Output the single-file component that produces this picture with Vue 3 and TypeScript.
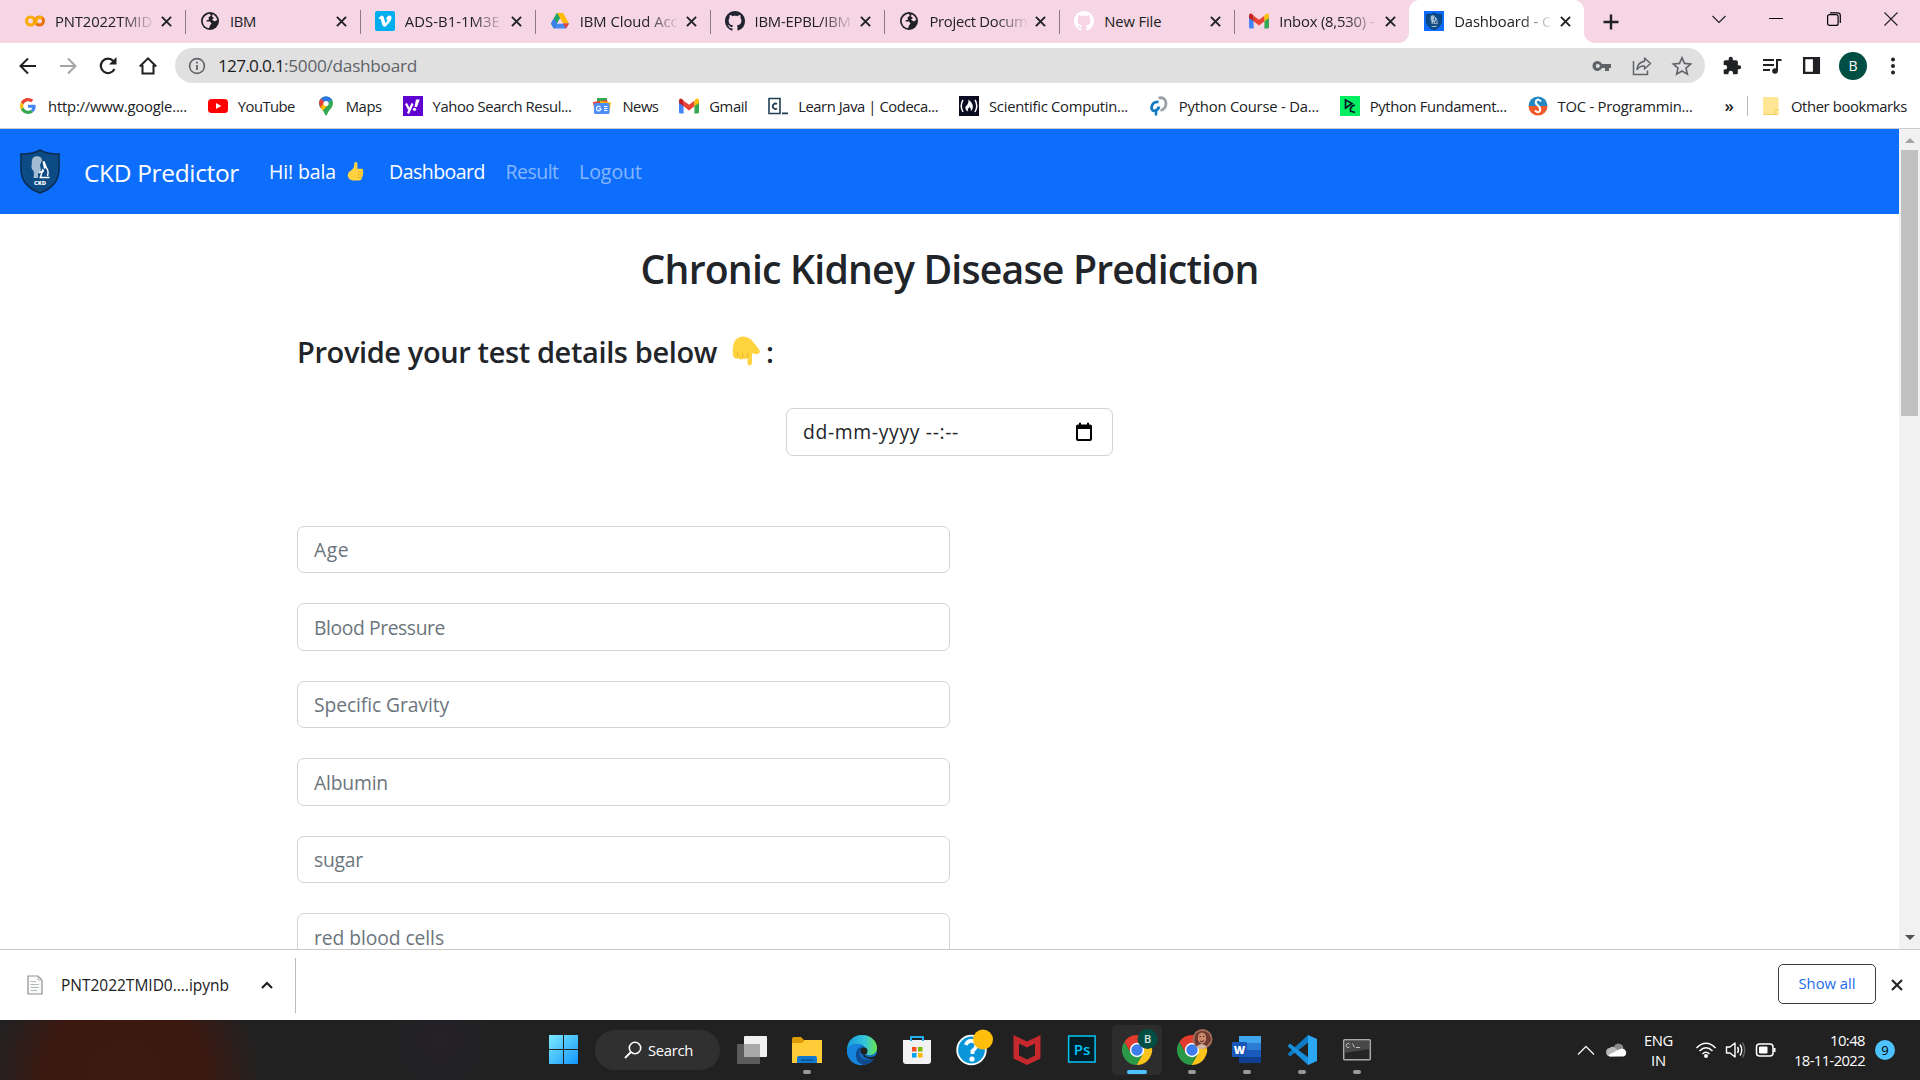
<script setup lang="ts">
import { h, nextTick, type FunctionalComponent, type ObjectDirective } from 'vue'

interface Glyph { box: string; body: string }
interface Entry { icon: string; label: string; width: number }

const chromeBody = `
  <path d="M3.3 8A15 15 0 0 1 29.3 9H16L16 16L9.9 19.5Z" fill="#e33b2e"/>
  <path d="M29.3 9A15 15 0 0 1 15.4 31L22.1 19.5L16 16V9Z" fill="#fcc31a"/>
  <path d="M15.4 31A15 15 0 0 1 3.3 8L9.9 19.5L16 16L22.1 19.5Z" fill="#2b9a48"/>
  <circle cx="16" cy="16" r="7.2" fill="#fff"/><circle cx="16" cy="16" r="5.7" fill="#3b7ded"/>`

const gmailBody = `
  <path d="M0 3V14.5Q0 16 1.5 16H4.6V6Z" fill="#4285f4"/><path d="M15.4 6V16H18.5Q20 16 20 14.5V3Z" fill="#34a853"/>
  <path d="M4.6 3.2L10 7.3L15.4 3.2V8.8L10 13L4.6 8.8Z" fill="#ea4335"/>
  <path d="M0 3Q0 1 2 1Q3 1 4.6 3.2V8.8L0 5.4Z" fill="#c5221f"/><path d="M20 3Q20 1 18 1Q17 1 15.4 3.2V8.8L20 5.4Z" fill="#fbbc04"/>`

const catPath = 'M8 0C3.58 0 0 3.58 0 8c0 3.54 2.29 6.53 5.47 7.59.4.07.55-.17.55-.38 0-.19-.01-.82-.01-1.49-2.01.37-2.53-.49-2.69-.94-.09-.23-.48-.94-.82-1.13-.28-.15-.68-.52-.01-.53.63-.01 1.08.58 1.23.82.72 1.21 1.87.87 2.33.66.07-.52.28-.87.51-1.07-1.78-.2-3.64-.89-3.64-3.95 0-.87.31-1.59.82-2.15-.08-.2-.36-1.02.08-2.12 0 0 .67-.21 2.2.82.64-.18 1.32-.27 2-.27s1.36.09 2 .27c1.53-1.04 2.2-.82 2.2-.82.44 1.1.16 1.92.08 2.12.51.56.82 1.27.82 2.15 0 3.07-1.87 3.75-3.65 3.95.29.25.54.73.54 1.48 0 1.07-.01 1.93-.01 2.2 0 .21.15.46.55.38A8.01 8.01 0 0 0 16 8c0-4.42-3.58-8-8-8Z'

const shieldBody = `
  <path d="M20 1C14 5 7 5 1 5V20C1 32 9 40 20 44C31 40 39 32 39 20V5C33 5 26 5 20 1Z" fill="#0d4b85" stroke="#082c52" stroke-width="1.6"/>
  <path d="M13.500 29Q14.500 25 13.500 22Q10.500 19 11.800 15.500Q11 7.500 16.500 7.300Q21.500 7 22 11.500L20 16L21 21L18 25V29Z" fill="#a5bdd3"/>
  <path d="M22.500 12.500L24.500 12L27 18.500L24 20Z" fill="#fff"/>
  <path d="M25 17.500Q29.500 21 27.500 27M19.500 28.500H29.500M19 23.500L24 22M23 20L20.500 28" fill="none" stroke="#fff" stroke-width="1.500"/>
  <text x="20" y="36" text-anchor="middle" font-family="Open Sans,sans-serif" font-weight="800" font-size="5.800" fill="#fff">CKD</text>`

const glyphs: Record<string, Glyph> = {
  colab: { box: '0 0 20 20', body: '<circle cx="5.500" cy="10" r="4" fill="none" stroke="#f9ab00" stroke-width="3"/><circle cx="14.500" cy="10" r="4" fill="none" stroke="#e8710a" stroke-width="3"/><path d="M11.700 12.800A4 4 0 0 1 17.300 7.200" fill="none" stroke="#f9ab00" stroke-width="3"/>' },
  globe: { box: '0 0 20 20', body: '<circle cx="10" cy="10" r="9" fill="#202124"/><path d="M3 8Q4.500 4 9.500 2.700L11 4.500L8.500 6.500L9 8.500L6.500 9.500V10.500H10L11.500 12.500L10 14.500L9 17.200Q3.500 16.500 2.700 10.500ZM12.500 3.200Q16.300 4.800 17.200 9L14.500 10.500L12 8.500L14 7L12 5.500Z" fill="#f7d6e5"/>' },
  vimeo: { box: '0 0 20 20', body: '<rect width="20" height="20" rx="2" fill="#00adef"/><path d="M3.500 7L6.500 4.500Q8.600 4.200 9.100 7Q9.900 11.700 10.600 11.700Q11.300 11.600 12.300 9.500Q12.900 8 11 8.300Q12.200 4.500 14.900 4.600Q17.300 5 16.200 8.500Q14.800 12 10.500 15.500Q8.300 16.600 7.200 13.500L5.700 8.200Q5.300 7.300 4.200 8Z" fill="#fff"/>' },
  drive: { box: '0 0 20 20', body: '<path d="M7 2H13L10 7.300L4 17.500L1 12.500Z" fill="#1ea362"/><path d="M7 2H13L19 12.500H13Z" fill="#ffba00"/><path d="M1 12.500L4 17.500H16L19 12.500H7Z" fill="#4688f4"/><path d="M7 2L1 12.500L4 17.500L10 7.300Z" fill="#1fa463"/><path d="M1 12.500L4 17.500L7 12.400L4 7.300Z" fill="#3c80ef"/><path d="M13 12.500H19L16 17.500Z" fill="#ea4335"/><path d="M10 7.300L13 12.500H7Z" fill="#f7d6e5"/>' },
  cat: { box: '0 0 16 16', body: `<path d="${catPath}" fill="#202430"/>` },
  catLight: { box: '0 0 16 16', body: `<path d="${catPath}" fill="#fff"/>` },
  gmail: { box: '0 -1.500 20 20', body: gmailBody },
  dash: { box: '0 0 40 40', body: `<rect width="40" height="40" fill="#0d6efd"/><g transform="translate(4 3) scale(.8 .78)">${shieldBody}</g>` },
  shield: { box: '0 0 40 45', body: shieldBody },
  close: { box: '0 0 12 12', body: '<path d="M1 1L11 11M11 1L1 11" stroke="#202124" stroke-width="2.100"/>' },
  plus: { box: '0 0 16 16', body: '<path d="M8 .5V15.500M.5 8H15.500" stroke="#202124" stroke-width="2.400"/>' },
  back: { box: '0 0 20 20', body: '<path d="M18 10H3M10 2.500L2.500 10L10 17.500" fill="none" stroke="#202124" stroke-width="2"/>' },
  forward: { box: '0 0 20 20', body: '<path d="M2 10H17M10 2.500L17.500 10L10 17.500" fill="none" stroke="#a3a5a8" stroke-width="2"/>' },
  reload: { box: '0 0 20 20', body: '<path d="M16.500 13A7.200 7.200 0 1 1 15.300 5" fill="none" stroke="#202124" stroke-width="2.200"/><path d="M18.500 1V8.500H11Z" fill="#202124"/>' },
  home: { box: '0 0 20 20', body: '<path d="M1.800 10.500L10 2.300L18.200 10.500M4.500 9V17.500H15.500V9" fill="none" stroke="#202124" stroke-width="2"/>' },
  info: { box: '0 0 18 18', body: '<circle cx="9" cy="9" r="7.400" fill="none" stroke="#5f6368" stroke-width="1.600"/><path d="M9 8V13M9 4.800V6.600" stroke="#5f6368" stroke-width="1.800"/>' },
  key: { box: '0 0 20 20', body: '<path d="M10 8A5 5 0 1 0 10 12H13V15H17V12H19V8ZM5.800 12A2 2 0 1 1 5.800 8A2 2 0 0 1 5.800 12Z" fill="#5f6368" fill-rule="evenodd"/>' },
  share: { box: '0 0 20 20', body: '<path d="M1.500 5V18.500H15.500V14.500" fill="none" stroke="#5f6368" stroke-width="1.500"/><path d="M12.500 2L18.500 7.500L12.500 13V10Q8 9.500 5 13.500Q5.500 6.500 12.500 5.300Z" fill="none" stroke="#5f6368" stroke-width="1.500" stroke-linejoin="round"/>' },
  star: { box: '0 0 20 20', body: '<path d="M10 1.700L12.500 7.400L18.700 8L14 12.100L15.400 18.200L10 15L4.600 18.200L6 12.100L1.300 8L7.500 7.400Z" fill="none" stroke="#5f6368" stroke-width="1.600"/>' },
  puzzle: { box: '0 0 24 24', body: '<path d="M20.500 11H19V7c0-1.100-.9-2-2-2h-4V3.500a2.500 2.500 0 0 0-5 0V5H4c-1.100 0-2 .9-2 2v3.800h1.500a2.700 2.700 0 0 1 0 5.400H2V20c0 1.100.9 2 2 2h3.800v-1.500a2.700 2.700 0 0 1 5.400 0V22H17c1.100 0 2-.9 2-2v-4h1.500a2.500 2.500 0 0 0 0-5z" fill="#202124"/>' },
  music: { box: '0 0 20 20', body: '<path d="M1 4H12M1 9H12M1 14H8" stroke="#202124" stroke-width="2"/><circle cx="13" cy="15" r="2.800" fill="#202124"/><path d="M15 15V4H19.500" fill="none" stroke="#202124" stroke-width="2"/>' },
  panel: { box: '0 0 20 20', body: '<path d="M1 1H19V19H1ZM3.500 3.500V16.500H11.500V3.500Z" fill="#202124" fill-rule="evenodd"/>' },
  dots: { box: '0 0 6 20', body: '<g fill="#202124"><circle cx="3" cy="3.500" r="2"/><circle cx="3" cy="10" r="2"/><circle cx="3" cy="16.500" r="2"/></g>' },
  winDown: { box: '0 0 14 14', body: '<path d="M.5 4L7 10.500L13.500 4" fill="none" stroke="#222" stroke-width="1.100"/>' },
  winMin: { box: '0 0 14 14', body: '<path d="M0 6.500H14" stroke="#000" stroke-width="1"/>' },
  winRestore: { box: '0 0 14 14', body: '<rect x=".6" y="2.600" width="10.500" height="10.800" rx="2" fill="none" stroke="#000" stroke-width="1.200"/><path d="M3 .8H10.500Q13.300 .8 13.300 3.500V11" fill="none" stroke="#000" stroke-width="1.200"/>' },
  winClose: { box: '0 0 14 14', body: '<path d="M.5 .5L13.500 13.500M13.500 .5L.5 13.500" stroke="#222" stroke-width="1.100"/>' },
  google: { box: '0 0 48 48', body: '<path fill="#EA4335" d="M24 9.500c3.540 0 6.710 1.220 9.210 3.600l6.850-6.850C35.900 2.380 30.470 0 24 0 14.620 0 6.510 5.380 2.560 13.220l7.980 6.190C12.430 13.720 17.740 9.500 24 9.500z"/><path fill="#4285F4" d="M46.980 24.550c0-1.570-.15-3.090-.38-4.550H24v9.020h12.940c-.58 2.960-2.260 5.480-4.780 7.180l7.730 6c4.510-4.180 7.090-10.360 7.090-17.650z"/><path fill="#FBBC05" d="M10.530 28.590c-.48-1.450-.76-2.990-.76-4.590s.27-3.140.76-4.590l-7.980-6.190C.92 16.460 0 20.120 0 24c0 3.880.92 7.540 2.560 10.780l7.970-6.190z"/><path fill="#34A853" d="M24 48c6.480 0 11.930-2.130 15.890-5.810l-7.730-6c-2.150 1.450-4.920 2.300-8.160 2.300-6.260 0-11.570-4.220-13.470-9.910l-7.980 6.190C6.510 42.620 14.620 48 24 48z"/>' },
  youtube: { box: '0 0 20 20', body: '<rect y="3" width="20" height="14" rx="3.500" fill="#f00"/><path d="M8 7V13L13.300 10Z" fill="#fff"/>' },
  maps: { box: '0 0 20 20', body: '<clipPath id="pin"><path d="M10 .5A7 7 0 0 1 17 7.500Q17 10.500 14 13.500Q11.500 16.500 10.800 19Q10 20.300 9.200 19Q8.500 16.500 6 13.500Q3 10.500 3 7.500A7 7 0 0 1 10 .5Z"/></clipPath><g clip-path="url(#pin)"><path d="M0 0H20V20H0Z" fill="#34a853"/><path d="M0 0H20L4.500 12.500H0Z" fill="#4285f4"/><path d="M0 0H7L10 7L4.500 12Z" fill="#ea4335"/><path d="M6 0H20V5L13 4L10 7L5 3Z" fill="#2b78e4"/><path d="M4 12L10 5L12 9L6.500 15Z" fill="#fbbc04"/></g><circle cx="10" cy="7.500" r="2.600" fill="#fff"/>' },
  yahoo: { box: '0 0 20 20', body: '<rect width="20" height="20" fill="#5f01d1"/><path d="M3 7.500L6 13.300M9.500 7.500L5 17.500" stroke="#fff" stroke-width="2.300" fill="none"/><path d="M13 3.500H16.800L14 11H11.500Z" fill="#fff"/><circle cx="11.500" cy="13.300" r="1.600" fill="#fff"/>' },
  news: { box: '0 0 20 20', body: '<path d="M5 2H15V10H5Z" fill="#34a853"/><path d="M1 6L15 4L17 12H2Z" fill="#ea4335"/><path d="M8 5L19 6.500L17.500 15H8Z" fill="#fbbc04"/><rect x="2" y="7" width="15.500" height="11" rx="1.500" fill="#4e8df5"/><path d="M12 10.500H15.500M12 12.500H15.500M12 14.500H15.500M8.600 11.200A2.300 2.300 0 1 0 9 12.800H6.800" stroke="#fff" stroke-width="1.100" fill="none"/>' },
  codecademy: { box: '0 0 20 20', body: '<path d="M1 2.500H12V17.500H1Z" fill="none" stroke="#204056" stroke-width="1.600"/><path d="M9 8A2.700 2.700 0 1 0 9 12.500M14 17.300H20" fill="none" stroke="#204056" stroke-width="1.800"/>' },
  fcc: { box: '0 0 20 20', body: '<rect width="20" height="20" fill="#0a0a23"/><path d="M4 4Q.5 9.500 4 16M16 4Q19.500 9.500 16 16" fill="none" stroke="#fff" stroke-width="1.500"/><path d="M9.500 3.500Q14.500 8 13.800 11.500Q13.500 14 11.800 15Q12.300 12.500 10.300 10.500Q10.500 12.500 8.800 12.800Q8.600 14.500 9.200 15.500Q5.800 14 6.500 10.500Q9.800 8 9.500 3.500Z" fill="#fff"/>' },
  pycourse: { box: '0 0 20 20', body: '<path d="M9.500 6Q3.500 5.500 2.500 11.500Q3 16 6.500 14.500Q9.500 13.500 10 10.500" fill="none" stroke="#147bc2" stroke-width="2.800"/><path d="M7 14V19.500" stroke="#147bc2" stroke-width="2.600"/><path d="M9.500 2Q16.500 .5 17 7.500Q16.500 13.500 11.500 14.500" fill="none" stroke="#9aa0a5" stroke-width="2.800"/>' },
  datacamp: { box: '0 0 20 20', body: '<rect width="20" height="20" fill="#03ef62"/><path d="M5.500 13V4L12 7.500L5 12.500M15 9Q9.500 10.500 10.500 15L15 16.500" fill="none" stroke="#05192d" stroke-width="1.700"/>' },
  toc: { box: '0 0 20 20', body: '<path d="M.5 10A9.500 9.500 0 0 1 19.500 10Z" fill="#2387c4"/><path d="M.5 10A9.500 9.500 0 0 0 19.500 10Z" fill="#f0592a"/><path d="M13 5.500Q10.500 2 8 5Q7 7.500 10 9.500Q13 12 12 15Q10 17.500 7 14.500" fill="none" stroke="#fff" stroke-width="2"/>' },
  folder: { box: '0 0 20 20', body: '<path d="M2 2Q2 1 3 1H16Q17.500 1 17.500 2.500V11L18 18Q18 19 16 19H3Q2 19 2 18Z" fill="#ffe694"/><path d="M14 18V13.500H17.500M2.500 18.500H16.500" stroke="#f0cf5e" fill="none"/>' },
  file: { box: '0 0 16 20', body: '<path d="M1 1H11L15 5V19H1Z" fill="#fafafa" stroke="#8f8f8f" stroke-width="1.200"/><path d="M11 1V5H15M3.500 6.500H9M3.500 9.500H12M3.500 12.500H12M3.500 15.500H10" fill="none" stroke="#b3b8bb"/>' },
  chevUp: { box: '0 0 12 8', body: '<path d="M1 7L6 2L11 7" fill="none" stroke="#202124" stroke-width="2.200"/>' },
  calendar: { box: '0 0 18 20', body: '<path d="M1 4.500Q1 2.500 3 2.500H4V.8H6V2.500H12V.8H14V2.500H15Q17 2.500 17 4.500V17Q17 19 15 19H3Q1 19 1 17ZM3 7V17H15V7Z" fill="#000" fill-rule="evenodd"/>' },
  thumbUp: { box: '0 0 18 22', body: '<path d="M5 9.500Q8 7 7.700 2Q9.500 -.2 11 2.500L11 8H16Q18 9 16.800 11Q18 12.300 16.700 14Q17.500 15.800 15.900 17Q16 19.800 13 20.500H6Q1 19.500 .8 15Q1 11.500 5 9.500Z" fill="#ffd23f"/><path d="M11 11.500H16.500M11 14.500H16.500M11 17.500H15.500" stroke="#e8ab2a" fill="none"/>' },
  pointDown: { box: '0 0 28 30', body: '<path d="M1 20Q-1 1 11 .5Q18 .5 22 7L27.500 14Q28.500 17 25.500 18Q23 18.500 20 17V27Q19.500 29.500 17.500 29.500Q15.500 29.500 15.500 27V21Q14.500 24 11.500 22.500Q9 24.500 6.500 22.200Q3 23.800 1 20Z" fill="#ffd43e"/><path d="M5.800 16V21.500M10.800 17V22M15.500 17V22" stroke="#eeb32c" fill="none"/>' },
  start: { box: '0 0 30 30', body: '<linearGradient id="win" x2="1" y2="1"><stop stop-color="#7deaff"/><stop offset="1" stop-color="#1296fb"/></linearGradient><path d="M0 0H14V14H0ZM15 0H29V14H15ZM0 15H14V29H0ZM15 15H29V29H15Z" fill="url(#win)"/>' },
  lens: { box: '0 0 18 18', body: '<circle cx="11" cy="7" r="5.700" fill="none" stroke="#fff" stroke-width="1.600"/><path d="M7 11L1 17" stroke="#fff" stroke-width="1.800"/>' },
  taskview: { box: '0 0 32 32', body: '<rect x="8" y="2" width="23" height="21" rx="1" fill="#f0f0f0"/><rect x="1" y="10" width="23" height="20" rx="1" fill="#5c5c5c"/><path d="M8 10H24V23H8Z" fill="#a8a8a8"/>' },
  explorer: { box: '0 0 32 32', body: '<path d="M1 5Q1 3 3 3H10L13 6H19V13H1Z" fill="#dd9b08"/><path d="M1 9H11L14 6H31V29H1Z" fill="#ffcc38"/><path d="M6 29V24Q6 22 8 22H24Q26 22 26 24V29Z" fill="#1178cb"/><path d="M10 26H22" stroke="#064b8d" stroke-width="1.300"/>' },
  edge: { box: '0 0 32 32', body: '<linearGradient id="sea" x2="1"><stop stop-color="#189ad8"/><stop offset=".6" stop-color="#35c5dc"/><stop offset="1" stop-color="#6be648"/></linearGradient><circle cx="16" cy="16" r="15" fill="#0d68bf"/><path d="M1 17C1 6 8 1 16 1C25 1 31 7 31 14C31 19 27 22 22 21Q18 20 20 17C20 9 7 7 1 17Z" fill="url(#sea)"/><path d="M1 16C4 9 12 8 16 12Q10 13 10.500 20Q12 28 20 30.500C8 34 0 24 1 16Z" fill="#1484dc"/><path d="M19 15Q13 14 13 20Q15 29 28 24Q25 31 17 31Q9 28 10 19Q12 12 19 15Z" fill="#114a8c"/><circle cx="18" cy="17" r="3.500" fill="#202020"/><path d="M18 20.400Q22 25 29 22L32 19.500V24L29 24.500Q23 27 17 22Z" fill="#202020"/>' },
  store: { box: '0 0 32 32', body: '<path d="M10 8V3H22V8" fill="none" stroke="#24aef0" stroke-width="2"/><path d="M2 6H30V27Q30 30 27 30H5Q2 30 2 27Z" fill="#f2f2f2"/><path d="M10 7V3H22V7" fill="none" stroke="#24aef0" stroke-width="2"/><path d="M11 13H15.500V17.500H11Z" fill="#f25022"/><path d="M17 13H21.500V17.500H17Z" fill="#7fba00"/><path d="M11 19H15.500V23.500H11Z" fill="#00a4ef"/><path d="M17 19H21.500V23.500H17Z" fill="#ffb900"/>' },
  help: { box: '0 0 32 32', body: '<circle cx="15.500" cy="16" r="14.300" fill="#0996d8" stroke="#fff" stroke-width="1.800"/><path d="M10 11Q11 6.500 16 6.800Q21.500 8 20 13Q19 15 16.500 17V20" fill="none" stroke="#fff" stroke-width="3.800"/><circle cx="16" cy="25" r="2.600" fill="#fff"/><circle cx="27" cy="5.500" r="10" fill="#ffbe0b"/>' },
  mcafee: { box: '0 0 32 32', body: '<path d="M2.500 1L16 7.500L29.500 1V24.500L16 31L2.500 24.500ZM8 9.500V21.500L16 25.500L24 21.500V9.500L16 13.500Z" fill="#c5292e" fill-rule="evenodd"/>' },
  photoshop: { box: '0 0 32 32', body: '<rect x="2.600" y="2" width="26.500" height="26" fill="#001d26" stroke="#06c3f5" stroke-width="1.500"/><text x="16" y="20.500" text-anchor="middle" font-family="Open Sans,sans-serif" font-weight="600" font-size="15" fill="#06c3f5">Ps</text>' },
  chromeB: { box: '0 0 32 32', body: `${chromeBody}<circle cx="26.500" cy="5" r="10" fill="#004e44"/><text x="26.700" y="9" text-anchor="middle" font-family="Open Sans,sans-serif" font-weight="600" font-size="11" fill="#d6e6e3">B</text>` },
  chromeP: { box: '0 0 32 32', body: `${chromeBody}<circle cx="26.500" cy="5" r="10" fill="#a36c57"/><path d="M19 9Q17 -2 26 -3Q34 -3 35 6Q31 13 28 13L21 13Z" fill="#6f3a31"/><ellipse cx="26" cy="4" rx="4.200" ry="5.500" fill="#cc8a6c"/><path d="M20 13Q26 7 31 13Q26 17 20 13Z" fill="#cfb6a5"/><path d="M24 7Q26 8.500 28 6.500M23.500 2.500H25M27 2.500H28.500" stroke="#4d251e" fill="none"/>` },
  word: { box: '0 0 32 32', body: '<path d="M8 2H30V9H8Z" fill="#41a5ee"/><path d="M8 9H30V16H8Z" fill="#2b7cd3"/><path d="M8 16H30V23H8Z" fill="#185abd"/><path d="M8 23H30V29H8Z" fill="#103f91"/><rect x="1" y="8" width="15" height="15" rx="1" fill="#1857b8"/><text x="8.500" y="19.500" text-anchor="middle" font-family="Open Sans,sans-serif" font-weight="800" font-size="11" fill="#fff">W</text>' },
  vscode: { box: '0 0 32 32', body: '<path d="M22 1L1.500 20L4 22.500L23 8Z" fill="#0f7bc4"/><path d="M22 31L1.500 12L4 9.500L23 24Z" fill="#178fdb"/><path d="M22 1L31 5V27L22 31Z" fill="#2ba6f2"/>' },
  cmd: { box: '0 0 32 32', body: '<rect x="2.700" y="5.700" width="26.600" height="20" rx="1" fill="#252525" stroke="#a9a9a9" stroke-width="1.500"/><path d="M4 7H28V15L4 19Z" fill="#484848"/><path d="M8.500 10A2 2 0 1 0 8.500 13M10 10.500V10.600M10 13V13.100M11.500 9.500L13.500 13.500M15 13.500H19" stroke="#ccc" fill="none" stroke-width=".9"/>' },
  trayUp: { box: '0 0 18 10', body: '<path d="M1 9.500L9 1.500L17 9.500" fill="none" stroke="#eee" stroke-width="1.400"/>' },
  cloud: { box: '0 0 21 14', body: '<path d="M4.500 13.500A4.300 4.300 0 0 1 3.500 5Q6 3 8 4Q10 -.5 14 1Q17 2 17.200 5L12 13Z" fill="#b8b8b8"/><path d="M8 4Q10 -.5 14 1Q17 2 17.200 5L13 8Z" fill="#888"/><path d="M4 13.500Q3 13 2.500 12L14 6Q18.500 4.500 20 8.500Q21 12 17.500 13.500Z" fill="#fff"/>' },
  wifi: { box: '0 0 22 18', body: '<g fill="none" stroke="#fff" stroke-width="1.500"><path d="M1.500 7Q11 -2.500 20.500 7"/><path d="M4.500 10Q11 3.500 17.500 10"/><path d="M7.500 13Q11 9.500 14.500 13"/></g><circle cx="11" cy="15" r="2" fill="#fff"/>' },
  speaker: { box: '0 0 22 18', body: '<path d="M1.500 6H5L10 2V16L5 12H1.500Z" fill="none" stroke="#fff" stroke-width="1.400" stroke-linejoin="round"/><path d="M12.500 6Q14.500 9 12.500 12M15 3.500Q18.500 9 15 14.500" fill="none" stroke="#fff" stroke-width="1.400"/><path d="M17.500 1.500Q22 9 17.500 16.500" fill="none" stroke="#666" stroke-width="1.400"/>' },
  battery: { box: '0 0 22 16', body: '<rect x="1.500" y="2" width="16.500" height="12" rx="3" fill="none" stroke="#fff" stroke-width="1.500"/><rect x="4" y="4.500" width="8.500" height="7" rx="1" fill="#fff"/><path d="M19.500 6V10" stroke="#fff" stroke-width="2"/>' },
}

const Icon: FunctionalComponent<{ name: string; w: number; h?: number }> = (p) =>
  h('svg', {
    viewBox: glyphs[p.name].box,
    width: p.w,
    height: p.h ?? p.w,
    innerHTML: glyphs[p.name].body,
    class: 'glyph',
  })
Icon.props = ['name', 'w', 'h']

// Tracks a label so that it takes up exactly the given number of pixels.
const vFit: ObjectDirective<HTMLElement, number> = {
  mounted(el, { value }) {
    nextTick(() => {
      const range = document.createRange()
      range.selectNodeContents(el)
      const natural = range.getBoundingClientRect().width
      const count = (el.textContent ?? '').trim().length
      el.style.letterSpacing = `${((value - natural) / count).toFixed(3)}px`
    })
  },
}

const tabs: Entry[] = [
  { icon: 'colab', label: 'PNT2022TMID', width: 97 },
  { icon: 'globe', label: 'IBM', width: 26 },
  { icon: 'vimeo', label: 'ADS-B1-1M3E', width: 95 },
  { icon: 'drive', label: 'IBM Cloud Acc', width: 98 },
  { icon: 'cat', label: 'IBM-EPBL/IBM', width: 96 },
  { icon: 'globe', label: 'Project Docum', width: 98 },
  { icon: 'catLight', label: 'New File', width: 57 },
  { icon: 'gmail', label: 'Inbox (8,530) -', width: 95 },
  { icon: 'dash', label: 'Dashboard - C', width: 97 },
]

const bookmarks: Entry[] = [
  { icon: 'google', label: 'http://www.google....', width: 139 },
  { icon: 'youtube', label: 'YouTube', width: 57 },
  { icon: 'maps', label: 'Maps', width: 36 },
  { icon: 'yahoo', label: 'Yahoo Search Resul...', width: 139 },
  { icon: 'news', label: 'News', width: 36 },
  { icon: 'gmail', label: 'Gmail', width: 38 },
  { icon: 'codecademy', label: 'Learn Java | Codeca...', width: 140 },
  { icon: 'fcc', label: 'Scientific Computin...', width: 139 },
  { icon: 'pycourse', label: 'Python Course - Da...', width: 140 },
  { icon: 'datacamp', label: 'Python Fundament...', width: 137 },
  { icon: 'toc', label: 'TOC - Programmin...', width: 135 },
]

const fields = [
  { label: 'Age', width: 35 },
  { label: 'Blood Pressure', width: 131 },
  { label: 'Specific Gravity', width: 135 },
  { label: 'Albumin', width: 74 },
  { label: 'sugar', width: 49 },
  { label: 'red blood cells', width: 130 },
]

const apps = [
  { icon: 'taskview', state: '' },
  { icon: 'explorer', state: 'open' },
  { icon: 'edge', state: '' },
  { icon: 'store', state: '' },
  { icon: 'help', state: '' },
  { icon: 'mcafee', state: '' },
  { icon: 'photoshop', state: '' },
  { icon: 'chromeB', state: 'active' },
  { icon: 'chromeP', state: 'open' },
  { icon: 'word', state: 'open' },
  { icon: 'vscode', state: 'open' },
  { icon: 'cmd', state: 'open' },
]
</script>

<template>
  <div class="screen">
    <div class="tabstrip">
      <div v-for="(tab, i) in tabs" :key="i" class="tab" :class="{ active: i === 8, last: i === 7 }">
        <Icon :name="tab.icon" :w="20" />
        <div class="tab-title" :class="{ faded: tab.width > 90 }"><span v-fit="tab.width">{{ tab.label }}</span></div>
        <Icon name="close" :w="11" />
      </div>
      <div class="new-tab"><Icon name="plus" :w="16" /></div>
      <div class="window-buttons">
        <Icon name="winDown" :w="14" />
        <Icon name="winMin" :w="14" />
        <Icon name="winRestore" :w="14" />
        <Icon name="winClose" :w="14" />
      </div>
    </div>

    <div class="toolbar">
      <div class="nav-buttons">
        <Icon name="back" :w="20" />
        <Icon name="forward" :w="20" />
        <Icon name="reload" :w="20" />
        <Icon name="home" :w="20" />
      </div>
      <div class="omnibox">
        <Icon name="info" :w="18" />
        <div class="url"><span v-fit="66">127.0.0.1</span><span v-fit="133" class="path">:5000/dashboard</span></div>
        <div class="omni-actions">
          <Icon name="key" :w="20" />
          <Icon name="share" :w="20" />
          <Icon name="star" :w="20" />
        </div>
      </div>
      <div class="tools">
        <Icon name="puzzle" :w="20" />
        <Icon name="music" :w="20" />
        <Icon name="panel" :w="19" />
        <div class="profile">B</div>
        <Icon name="dots" :w="6" :h="20" />
      </div>
    </div>

    <div class="bookmarks">
      <div v-for="mark in bookmarks" :key="mark.label" class="bookmark">
        <div class="favicon"><Icon :name="mark.icon" :w="mark.icon === 'google' ? 16 : 20" /></div>
        <span v-fit="mark.width">{{ mark.label }}</span>
      </div>
      <span class="more">»</span>
      <i class="rule"></i>
      <div class="bookmark other"><Icon name="folder" :w="20" /><span v-fit="116">Other bookmarks</span></div>
    </div>

    <div class="viewport">
      <main class="page">
        <nav class="navbar">
          <Icon name="shield" :w="40" :h="45" />
          <span v-fit="155" class="brand">CKD Predictor</span>
          <span class="greeting"><span v-fit="67">Hi! bala</span><Icon name="thumbUp" :w="17" :h="21" /></span>
          <span v-fit="96" class="link on">Dashboard</span>
          <span v-fit="53" class="link">Result</span>
          <span v-fit="63" class="link">Logout</span>
        </nav>
        <h1><span v-fit="618">Chronic Kidney Disease Prediction</span></h1>
        <section class="form">
          <h3><span v-fit="420">Provide your test details below</span><Icon name="pointDown" :w="28" :h="30" /><span>:</span></h3>
          <div class="control date"><span v-fit="156">dd-mm-yyyy --:--</span><Icon name="calendar" :w="18" :h="20" /></div>
          <div class="fields">
            <div v-for="f in fields" :key="f.label" class="control"><span v-fit="f.width">{{ f.label }}</span></div>
          </div>
        </section>
      </main>
      <aside class="scrollbar"><i class="up"></i><i class="thumb"></i><i class="down"></i></aside>
    </div>

    <div class="downloads">
      <div class="download">
        <Icon name="file" :w="16" :h="20" />
        <span v-fit="168">PNT2022TMID0....ipynb</span>
        <Icon name="chevUp" :w="12" :h="8" />
      </div>
      <div class="show-all"><span v-fit="57">Show all</span></div>
      <Icon name="close" :w="12" />
    </div>

    <div class="taskbar">
      <Icon name="start" :w="30" />
      <div class="search"><Icon name="lens" :w="18" /><span v-fit="45">Search</span></div>
      <div class="apps">
        <div v-for="app in apps" :key="app.icon" class="app" :class="app.state"><Icon :name="app.icon" :w="32" /></div>
      </div>
      <div class="tray">
        <Icon name="trayUp" :w="18" :h="10" />
        <Icon name="cloud" :w="21" :h="14" />
        <div class="lang"><span v-fit="29">ENG</span><span v-fit="15">IN</span></div>
        <div class="status">
          <Icon name="wifi" :w="22" :h="18" />
          <Icon name="speaker" :w="22" :h="18" />
          <Icon name="battery" :w="22" :h="16" />
        </div>
        <div class="clock"><span v-fit="35">10:48</span><span v-fit="71">18-11-2022</span></div>
        <div class="badge">9</div>
      </div>
    </div>
  </div>
</template>

<style>
body {
  margin: 0;
  overflow: hidden;
}
.glyph {
  display: block;
  flex: none;
  overflow: visible;
}
</style>

<style scoped>
.screen {
  width: 1920px;
  height: 1080px;
  display: flex;
  flex-direction: column;
  overflow: hidden;
  background: #fff;
  color: #202124;
  font-family: 'Open Sans', 'Noto Sans', sans-serif;
  font-size: 14.8px;
  white-space: nowrap;
}
.tabstrip {
  height: 43px;
  flex: none;
  display: flex;
  padding-left: 10px;
  background: #f6d5e4;
}
.tab {
  width: 174.9px;
  box-sizing: border-box;
  display: flex;
  align-items: center;
  padding: 0 13px 1px 15px;
  position: relative;
}
.tab:not(.last):not(.active)::after {
  content: '';
  position: absolute;
  right: -1px;
  top: 10px;
  width: 1px;
  height: 24px;
  background: #8e7b84;
}
.tab-title {
  width: 98px;
  margin: 0 8px 0 10px;
  overflow: hidden;
}
.tab-title.faded {
  mask-image: linear-gradient(90deg, #000 68%, transparent 102%);
}
.tab.active {
  background: #fff;
  border-radius: 10px 10px 0 0;
}
.tab.active::before,
.tab.active::after {
  content: '';
  position: absolute;
  bottom: 0;
  width: 10px;
  height: 10px;
}
.tab.active::before {
  left: -10px;
  background: radial-gradient(circle at 0 0, transparent 9.5px, #fff 10px);
}
.tab.active::after {
  right: -10px;
  background: radial-gradient(circle at 100% 0, transparent 9.5px, #fff 10px);
}
.new-tab {
  display: flex;
  align-items: center;
  margin-left: 19px;
}
.window-buttons {
  display: flex;
  gap: 43.5px;
  margin-left: auto;
  padding: 12px 22px 0 0;
}
.toolbar {
  height: 45px;
  flex: none;
  display: flex;
  align-items: center;
}
.nav-buttons {
  width: 175px;
  display: flex;
  gap: 20px;
  padding-left: 18px;
  box-sizing: border-box;
}
.omnibox {
  width: 1530px;
  height: 35px;
  border-radius: 18px;
  background: #e0e0e0;
  display: flex;
  align-items: center;
  padding: 0 13px 0 13px;
  box-sizing: border-box;
}
.url {
  margin-left: 12px;
  font-size: 17.2px;
}
.path {
  color: #5f6368;
}
.omni-actions {
  display: flex;
  gap: 20px;
  margin-left: auto;
}
.tools {
  flex: 1;
  display: flex;
  align-items: center;
  padding-left: 17px;
  gap: 20px;
}
.profile {
  width: 28px;
  height: 28px;
  margin: 0 3px 0 -2px;
  border-radius: 50%;
  background: #004e44;
  color: #fff;
  font-size: 14px;
  line-height: 28px;
  text-align: center;
}
.bookmarks {
  height: 41px;
  flex: none;
  display: flex;
  align-items: center;
  padding: 0 0 5px 18px;
  box-sizing: border-box;
  border-bottom: 1px solid #c9cbce;
}
.bookmark {
  display: flex;
  align-items: center;
  gap: 10px;
  margin-right: 20.87px;
}
.favicon {
  width: 20px;
  height: 20px;
  display: flex;
  align-items: center;
  justify-content: center;
}
.more {
  margin-left: 11px;
  font-size: 17px;
  font-weight: 600;
}
.rule {
  width: 1px;
  height: 20px;
  margin: 0 13px;
  background: #bbb;
}
.bookmark.other {
  margin: 0;
}
.viewport {
  height: 820px;
  flex: none;
  display: flex;
  overflow: hidden;
}
.page {
  width: 1899px;
}
.navbar {
  height: 85px;
  background: #0d6efd;
  color: #fff;
  display: flex;
  align-items: center;
  padding-left: 20px;
  font-size: 19.5px;
}
.brand {
  margin: 1px 30px 0 24px;
  font-size: 24.5px;
}
.greeting {
  display: flex;
  align-items: center;
  gap: 11px;
}
.link {
  margin-left: 20.5px;
  color: rgba(255, 255, 255, 0.5);
}
.link.on {
  margin-left: 25px;
  color: #fff;
}
h1 {
  margin: 30px 0 0;
  height: 50px;
  font-size: 39.2px;
  line-height: 50px;
  font-weight: 600;
  color: #212529;
  text-align: center;
}
.form {
  padding-left: 297px;
}
h3 {
  margin: 37px 0 0;
  height: 40px;
  display: flex;
  align-items: center;
  font-size: 29px;
  font-weight: 600;
  color: #212529;
}
h3 .glyph {
  margin: 0 6px 0 15px;
}
.control {
  width: 653px;
  height: 47.5px;
  box-sizing: border-box;
  display: flex;
  align-items: center;
  padding: 1px 16px 0;
  border: 1px solid #ced4da;
  border-radius: 7px;
  color: #6c757d;
  font-size: 19.3px;
}
.control.date {
  width: 327px;
  margin: 37px 0 70px 489px;
  justify-content: space-between;
  padding: 0 19px 0 16px;
  color: #212529;
}
.fields {
  display: flex;
  flex-direction: column;
  gap: 30px;
}
.scrollbar {
  width: 21px;
  height: 820px;
  background: #f1f1f1;
  display: flex;
  flex-direction: column;
  align-items: center;
}
.up,
.down {
  width: 0;
  height: 0;
  border: 5px solid transparent;
}
.up {
  margin-top: 4px;
  border-bottom-color: #a3a3a3;
}
.thumb {
  width: 17px;
  height: 266px;
  margin-top: 7px;
  background: #c1c1c1;
}
.down {
  margin: auto 0 4px;
  border-top-color: #505050;
}
.downloads {
  height: 71px;
  flex: none;
  box-sizing: border-box;
  border-top: 1px solid #c9c9c9;
  display: flex;
  align-items: center;
  padding-right: 17px;
}
.download {
  width: 296px;
  height: 55px;
  box-sizing: border-box;
  border-right: 1px solid #bbb;
  display: flex;
  align-items: center;
  padding: 0 22px 0 27px;
  font-size: 15.5px;
}
.download span {
  margin: 0 auto 0 18px;
}
.show-all {
  width: 98px;
  height: 40px;
  margin: 0 15px 2px auto;
  box-sizing: border-box;
  border: 1px solid #3c4043;
  border-radius: 5px;
  color: #1a6dea;
  font-size: 14.8px;
  font-weight: 500;
  line-height: 37px;
  text-align: center;
}
.taskbar {
  height: 60px;
  flex: none;
  display: flex;
  align-items: center;
  padding-left: 549px;
  color: #fff;
  background: radial-gradient(circle at 125px 60px, #3c1b11 0, #3b1810 80px, rgba(59, 24, 16, 0) 135px),
    radial-gradient(circle at 440px 20px, #242128 0, rgba(36, 33, 40, 0) 60px), #212121;
}
.search {
  width: 125px;
  height: 40px;
  margin: 0 4px 0 16px;
  border-radius: 20px;
  background: #303030;
  display: flex;
  align-items: center;
  gap: 6px;
  padding-left: 29px;
  box-sizing: border-box;
}
.apps {
  display: flex;
}
.app {
  width: 55px;
  height: 50px;
  display: flex;
  align-items: center;
  justify-content: center;
  position: relative;
}
.app.active {
  width: 50px;
  margin: 0 2.5px;
  border-radius: 5px;
  background: #2d2d2d;
}
.app.open::after,
.app.active::after {
  content: '';
  position: absolute;
  bottom: 1px;
  left: calc(50% - 4px);
  width: 8px;
  height: 4px;
  border-radius: 2px;
  background: #9a9a9a;
}
.app.active::after {
  left: calc(50% - 10px);
  width: 20px;
  background: #4cc2ff;
}
.tray {
  margin-left: auto;
  padding-right: 25px;
  display: flex;
  align-items: center;
  font-size: 14.8px;
  line-height: 20px;
}
.tray > .glyph:nth-child(2) {
  margin: 0 17px 0 11px;
}
.lang,
.clock {
  display: flex;
  flex-direction: column;
  align-items: center;
}
.status {
  display: flex;
  align-items: center;
  gap: 8px;
  margin: 0 17px 0 22px;
}
.clock {
  align-items: flex-end;
}
.badge {
  width: 20px;
  height: 20px;
  margin-left: 10px;
  border-radius: 50%;
  background: #4cc2ff;
  color: #000;
  font-size: 13px;
  text-align: center;
}
</style>
